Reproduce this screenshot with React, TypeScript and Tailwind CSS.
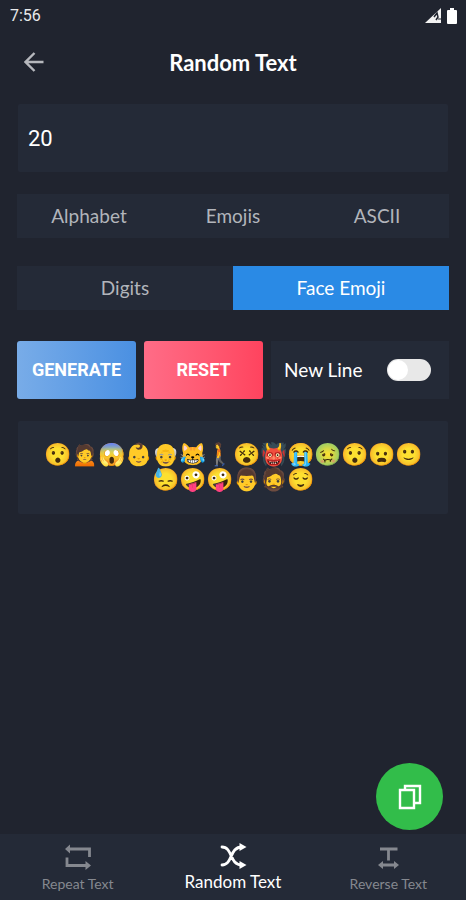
import { useState } from "react";

const emojis = ["😯", "🙍", "😱", "👶", "👴", "😹", "🚶", "😵", "👹", "😭", "🤢", "😯", "😦", "🙂", "😓", "🤪", "🤪", "👨", "🧔", "😌"];

function RepeatIcon() {
    return (
        <svg className="h-7 w-7" viewBox="0 0 28 28" fill="none" stroke="currentColor" strokeWidth="2.8">
            <path d="M5 7H25.500V15M23 23.500H3V15.500" />
            <path d="M6 2.500V11.500L1 7ZM21.500 19V28L27 23.500Z" fill="currentColor" stroke="none" />
        </svg>
    );
}

function ShuffleIcon() {
    return (
        <svg className="h-7 w-7" viewBox="0 0 28 28" fill="none" stroke="currentColor" strokeWidth="2.8" strokeLinecap="round">
            <path d="M3 5C14 5 10 23 23 23M3 23C14 23 10 5 23 5" />
            <path d="M20.500 1L27.500 5L20.500 9ZM20.500 19L27.500 23L20.500 27Z" fill="currentColor" stroke="none" />
        </svg>
    );
}

function ReverseIcon() {
    return (
        <svg className="h-7 w-7" viewBox="0 0 28 28" fill="none" stroke="currentColor" strokeWidth="2.8">
            <path d="M6 7H23.500M14.500 7V18.500M8 23H21" />
            <path d="M9 19V27L4 23ZM20 19V27L25 23Z" fill="currentColor" stroke="none" />
        </svg>
    );
}

function App() {
    const [amount, setAmount] = useState("20");
    const [newLine, setNewLine] = useState(false);

    return (
        <div className="flex min-h-screen flex-col bg-[#20242f] font-['Lato',sans-serif] text-white">
            <header>
                <div className="flex h-8 items-center justify-between pr-2 pl-[10px] font-['Roboto',sans-serif] text-base text-[#e8e9eb]">
                    <span>7:56</span>
                    <div className="flex items-center gap-1">
                        <svg className="h-4 w-[18px]" viewBox="0 0 18 16">
                            <path d="M1 15L17 0V15Z" fill="#f2f2f2" />
                            <path d="M10 9L13 5L14 9L12 12" fill="none" stroke="#20242f" strokeWidth="1.500" />
                            <path d="M14 11H17" stroke="#20242f" />
                        </svg>
                        <svg className="h-[18px] w-3" viewBox="0 0 12 18">
                            <path d="M4 1H8V3H10.500L11 4V16L10.500 17H1.500L1 16V4L1.500 3H4Z" fill="white" />
                        </svg>
                    </div>
                </div>
                <div className="grid h-[60px] grid-cols-[1fr_auto_1fr] items-center px-6">
                    <button aria-label="Back" className="w-5 text-[#b6b8bd]">
                        <svg className="h-5 w-5" viewBox="0 0 20 20" fill="none" stroke="currentColor" strokeWidth="2.4">
                            <path d="M19.500 10H2M10.500 1L1.500 10L10.500 19" />
                        </svg>
                    </button>
                    <h1 className="text-[22px] font-bold">Random Text</h1>
                </div>
            </header>

            <main className="flex-1 px-[17px] pt-3 pb-20">
                <div className="px-px">
                    <input
                        aria-label="Amount"
                        value={amount}
                        onChange={(e) => setAmount(e.target.value)}
                        className="block h-[68px] w-full rounded-xs bg-[#242a37] px-[10px] font-['Roboto',sans-serif] text-[22px]"
                    />
                </div>

                <div className="mt-[22px] grid h-11 grid-cols-3 bg-[#242a37] text-[19px] text-[#b2b5bb]">
                    <button>Alphabet</button>
                    <button>Emojis</button>
                    <button>ASCII</button>
                </div>
                <div className="mt-7 grid h-11 grid-cols-2 bg-[#242a37] text-[19px] text-[#b2b5bb]">
                    <button>Digits</button>
                    <button className="bg-[#2a8ae5] text-white">Face Emoji</button>
                </div>

                <div className="mt-[31px] flex gap-2">
                    <button className="h-[58px] w-[119px] rounded-[3px] bg-linear-to-r from-[#78ace8] to-[#4a90e2] font-['Roboto',sans-serif] text-lg font-bold">
                        GENERATE
                    </button>
                    <button className="h-[58px] w-[119px] rounded-[3px] bg-linear-to-r from-[#ff6c87] to-[#ff435e] font-['Roboto',sans-serif] text-lg font-bold">
                        RESET
                    </button>
                    <label className="flex flex-1 items-center justify-between bg-[#242a37] pr-[18px] pl-[13px] text-[19px]">
                        New Line
                        <input
                            type="checkbox"
                            role="switch"
                            checked={newLine}
                            onChange={(e) => setNewLine(e.target.checked)}
                            className="h-[22px] w-11 appearance-none rounded-full bg-[#e8e8e8] p-px before:block before:size-5 before:rounded-full before:bg-white checked:bg-[#2a8ae5] checked:before:ml-auto"
                        />
                    </label>
                </div>

                <div className="mt-[22px] px-px">
                    <p className="min-h-[93px] rounded-xs bg-[#242a37] px-6 pt-5 pb-[22px] text-center text-[22px] leading-[25px] break-all">
                        {emojis.join("")}
                    </p>
                </div>
            </main>

            <button aria-label="Copy" className="fixed right-[23px] bottom-[70px] flex size-[67px] items-center justify-center rounded-full bg-[#32bd4a]">
                <svg className="h-7 w-6" viewBox="0 0 24 28" fill="none" stroke="white" strokeWidth="2.4">
                    <path d="M7 6V3H22V20H17M2 7H16V25H2Z" />
                </svg>
            </button>

            <nav className="sticky bottom-0 grid h-[66px] grid-cols-3 bg-[#242a37] pt-2 text-sm text-[#85888f]">
                <a href="#repeat" className="flex flex-col items-center gap-1">
                    <RepeatIcon />
                    Repeat Text
                </a>
                <a href="#random" className="flex flex-col items-center text-[17px] text-white">
                    <ShuffleIcon />
                    Random Text
                </a>
                <a href="#reverse" className="flex flex-col items-center gap-1">
                    <ReverseIcon />
                    Reverse Text
                </a>
            </nav>
        </div>
    );
}

export default App;
